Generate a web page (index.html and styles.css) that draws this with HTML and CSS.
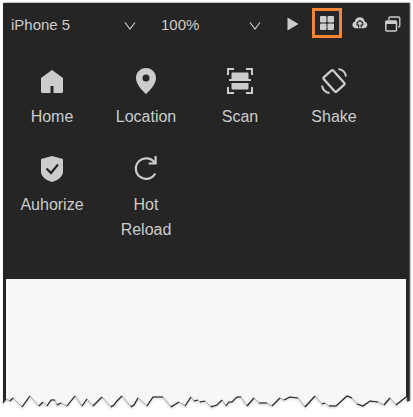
FILE: index.html
```html
<!DOCTYPE html>
<html lang="en">
<head>
<meta charset="utf-8">
<title>Simulator</title>
<link rel="stylesheet" href="styles.css">
</head>
<body>
<main class="simulator">
  <header class="toolbar">
    <div class="select device"><span>iPhone 5</span><svg class="chevron" viewBox="0 0 12 10"><path d="M1 1.500L6 8 11 1.500"/></svg></div>
    <div class="select scale"><span>100%</span><svg class="chevron" viewBox="0 0 12 10"><path d="M1 1.500L6 8 11 1.500"/></svg></div>
    <div class="actions">
      <svg class="play" viewBox="0 0 12 14"><path fill="currentColor" d="M.5.5L11.5 7 .5 13.5z"/></svg>
      <div class="selected"><svg width="14" height="14" viewBox="0 0 14 14" fill="currentColor"><rect width="6.500" height="6.500" rx="1"/><rect x="7.500" width="6.500" height="6.500" rx="1"/><rect y="7.500" width="6.500" height="6.500" rx="1"/><rect x="7.500" y="7.500" width="6.500" height="6.500" rx="1"/></svg></div>
      <svg class="cloud" viewBox="0 0 16 12"><path fill="currentColor" d="M4 11.200C1.700 11.200.4 9.700.4 7.800.4 6.100 1.500 4.800 3 4.400 3.300 1.800 5.300.3 7.800.3s4.500 1.500 4.800 4.100c1.600.4 2.700 1.600 2.700 3.300 0 2-1.500 3.500-3.500 3.500z"/><path d="M6.600 10.500V8H5.100V5.800L7.900 3.600l2.800 2.200V8H9.200v2.500" fill="none" stroke="#252525" stroke-width="1.200"/></svg>
      <svg class="windows" viewBox="0 0 16 16"><path d="M4 4V2.200Q4 1 5.200 1h8.300q1.300 0 1.300 1.300v7.400q0 1.200-1.200 1.200H13" fill="none" stroke="currentColor" stroke-width="1.300"/><rect x=".8" y="5" width="10.700" height="10" rx="1" fill="none" stroke="currentColor" stroke-width="1.500"/><path d="M.8 6.500h10.700" stroke="currentColor" stroke-width="3"/></svg>
    </div>
  </header>
  <section class="tools">
    <div class="tool"><svg viewBox="0 0 28 28"><path fill="currentColor" d="M14 3L25 11v13.500q0 1.500-1.500 1.500H15.500V19h-3v7H4.500Q3 26 3 24.500V11z"/></svg><span>Home</span></div>
    <div class="tool"><svg viewBox="0 0 28 28"><path fill="currentColor" fill-rule="evenodd" d="M14 1C8.400 1 4 5.400 4 10.900 4 17.500 10.500 23.500 14 27 17.500 23.500 24 17.500 24 10.900 24 5.400 19.600 1 14 1zm0 6.500a3.500 3.500 0 1 1 0 7 3.500 3.500 0 0 1 0-7z"/></svg><span>Location</span></div>
    <div class="tool"><svg viewBox="0 0 28 28"><path d="M2 8V2h6M20 2h6v6M2 20v6h6M20 26h6v-6" fill="none" stroke="currentColor" stroke-width="2"/><path fill="currentColor" d="M5.500 6.500q0-1 1-1h15q1 0 1 1V12h2.500v2H3v-2h2.500zM5.500 16h17v5.500q0 1-1 1h-15q-1 0-1-1z"/></svg><span>Scan</span></div>
    <div class="tool"><svg viewBox="0 0 28 28"><rect x="7.600" y="4.500" width="12.800" height="19" rx="1.500" transform="rotate(-42 14 14)" fill="none" stroke="currentColor" stroke-width="2.300"/><path d="M18.500 2A9 9 0 0 1 26 9.500M2 18.500A9 9 0 0 0 9.500 26" fill="none" stroke="currentColor" stroke-width="2"/></svg><span>Shake</span></div>
    <div class="tool"><svg viewBox="0 0 28 28"><path fill="currentColor" d="M14 1L25 4v12.500c0 5.500-5.500 9-11 10.500C8.500 25.500 3 22 3 16.500V4z"/><path d="M8.500 13.500L13 18l7-8.500" fill="none" stroke="#252525" stroke-width="2.200"/></svg><span>Auhorize</span></div>
    <div class="tool"><svg viewBox="0 0 28 28"><path d="M23.200 18.500A10.300 10.300 0 1 1 22.800 8M23.600 1v7.500h-7" fill="none" stroke="currentColor" stroke-width="2.200"/></svg><span>Hot Reload</span></div>
  </section>
  <section class="screen"></section>
</main>
<svg class="torn" width="413" height="30" viewBox="0 387 413 30">
  <path fill="#fff" d="M0 403L3 403 6 399 10 401 13 398 22 407 30 396 39 406 43 402 47 406 51 400 55 400 57 405 61 403 67 406 75 396 82 406 87 399 93 406 102 397 111 407 114 405 117 401 122 396 131 407 134 405 138 398 147 406 153 397 163 397 171 407 179 402 185 406 191 397 194 401 198 400 200 402 205 401 211 407 217 405 222 400 226 406 229 402 232 402 237 397 241 397 247 406 254 398 259 403 267 403 272 406 280 398 284 400 290 397 298 398 305 407 315 396 322 404 325 403 329 406 336 406 347 396 352 398 357 404 363 406 370 401 378 402 384 405 390 398 396 405 406 397 407 401 413 400V417H0z"/>
  <path class="soft-edge" d="M3 403L6 399 10 401 13 398 22 407 30 396 39 406 43 402 47 406 51 400 55 400 57 405 61 403 67 406 75 396 82 406 87 399 93 406 102 397 111 407 114 405 117 401 122 396 131 407 134 405 138 398 147 406 153 397 163 397 171 407 179 402 185 406 191 397 194 401 198 400 200 402 205 401 211 407 217 405 222 400 226 406 229 402 232 402 237 397 241 397 247 406 254 398 259 403 267 403 272 406 280 398 284 400 290 397 298 398 305 407 315 396 322 404 325 403 329 406 336 406 347 396 352 398 357 404 363 406 370 401 378 402 384 405 390 398 396 405 406 397 407 401 410 400"/>
  <path class="hard-edge" d="M3 403L6 399M10 401L13 398M22 407L30 396M39 406L43 402M47 406L51 400 55 400M57 405L61 403M67 406L75 396M82 406L87 399M93 406L102 397M111 407L114 405 117 401 122 396M131 407L134 405 138 398M147 406L153 397 163 397M171 407L179 402M185 406L191 397M194 401L198 400M200 402L205 401M211 407L217 405 222 400M226 406L229 402 232 402 237 397 241 397M247 406L254 398M259 403L267 403M272 406L280 398M284 400L290 397 298 398M305 407L315 396M322 404L325 403M329 406L336 406 347 396 352 398M357 404L363 406 370 401 378 402M384 405L390 398M396 405L406 397M407 401L410 400"/>
</svg>
</body>
</html>
```
FILE: styles.css
```css
* { box-sizing: border-box; }
body {
  margin: 0;
  width: 413px;
  height: 417px;
  overflow: hidden;
  position: relative;
  background: #fff;
  color: #ccc;
  font: 16px/25px "Liberation Sans", Arial, sans-serif;
}
.simulator {
  width: 406px;
  height: 402px;
  margin: 3px 0 0 3px;
  background: #252525;
  box-shadow: 1px 0 1px #555, 1px 0 2px #999;
  display: flex;
  flex-direction: column;
}
.toolbar {
  height: 43px;
  padding-left: 8px;
  display: flex;
  align-items: center;
  font-size: 15px;
}
.select {
  display: flex;
  align-items: center;
  justify-content: space-between;
}
.device { width: 125px; }
.scale { width: 100px; margin-left: 25px; }
.chevron {
  width: 12px;
  height: 10px;
  margin-top: 2px;
  fill: none;
  stroke: #ccc;
  stroke-width: 1.2;
}
.actions {
  display: flex;
  align-items: center;
  margin-left: 26px;
  margin-top: -3px;
}
.play { width: 12px; height: 14px; margin: 1px 13px 0 0; }
.selected {
  width: 30px;
  height: 30px;
  border: 3px solid #fa8334;
  display: grid;
  place-items: center;
}
.cloud { width: 16px; height: 12px; margin-left: 10px; }
.windows { width: 16px; height: 16px; margin-left: 17px; margin-top: 1px; }
.tools {
  padding: 21px 15px 0 2px;
  height: 233px;
  display: grid;
  grid-template-columns: repeat(4, 94px);
  grid-template-rows: 88px auto;
  align-content: start;
}
.tool {
  display: flex;
  flex-direction: column;
  align-items: center;
  text-align: center;
}
.tool svg { width: 28px; height: 28px; margin-bottom: 9px; }
.tool span { max-width: 70px; }
.screen { flex: 1; margin: 0 3px; background: #f7f7f7; }
.torn { position: absolute; left: 0; top: 387px; }
.soft-edge, .hard-edge { fill: none; stroke-width: 1; }
.soft-edge { stroke: #aaa; filter: drop-shadow(0 1px 1px #aaa); }
.hard-edge { stroke: #252525; stroke-width: 1.2; }
```
